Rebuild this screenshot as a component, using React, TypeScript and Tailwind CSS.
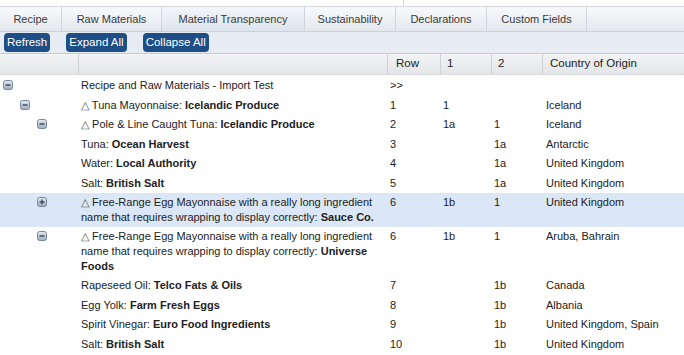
import React from 'react'

type Row = {
  level: number
  toggle?: 'minus' | 'plus'
  tri?: boolean
  name: string
  supplier?: string
  row: string
  c1: string
  c2: string
  country: string
  selected?: boolean
}

const rows: Row[] = [
  { level: 0, toggle: 'minus', name: 'Recipe and Raw Materials - Import Test', row: '>>', c1: '', c2: '', country: '' },
  { level: 1, toggle: 'minus', tri: true, name: 'Tuna Mayonnaise', supplier: 'Icelandic Produce', row: '1', c1: '1', c2: '', country: 'Iceland' },
  { level: 2, toggle: 'minus', tri: true, name: 'Pole & Line Caught Tuna', supplier: 'Icelandic Produce', row: '2', c1: '1a', c2: '1', country: 'Iceland' },
  { level: 3, name: 'Tuna', supplier: 'Ocean Harvest', row: '3', c1: '', c2: '1a', country: 'Antarctic' },
  { level: 3, name: 'Water', supplier: 'Local Authority', row: '4', c1: '', c2: '1a', country: 'United Kingdom' },
  { level: 3, name: 'Salt', supplier: 'British Salt', row: '5', c1: '', c2: '1a', country: 'United Kingdom' },
  {
    level: 2, toggle: 'plus', tri: true, selected: true,
    name: 'Free-Range Egg Mayonnaise with a really long ingredient name that requires wrapping to display correctly',
    supplier: 'Sauce Co.', row: '6', c1: '1b', c2: '1', country: 'United Kingdom',
  },
  {
    level: 2, toggle: 'minus', tri: true,
    name: 'Free-Range Egg Mayonnaise with a really long ingredient name that requires wrapping to display correctly',
    supplier: 'Universe Foods', row: '6', c1: '1b', c2: '1', country: 'Aruba, Bahrain',
  },
  { level: 3, name: 'Rapeseed Oil', supplier: 'Telco Fats & Oils', row: '7', c1: '', c2: '1b', country: 'Canada' },
  { level: 3, name: 'Egg Yolk', supplier: 'Farm Fresh Eggs', row: '8', c1: '', c2: '1b', country: 'Albania' },
  { level: 3, name: 'Spirit Vinegar', supplier: 'Euro Food Ingredients', row: '9', c1: '', c2: '1b', country: 'United Kingdom, Spain' },
  { level: 3, name: 'Salt', supplier: 'British Salt', row: '10', c1: '', c2: '1b', country: 'United Kingdom' },
]

const tabs = [
  { label: 'Recipe', w: 'w-[62px]' },
  { label: 'Raw Materials', w: 'w-[100px]' },
  { label: 'Material Transparency', w: 'w-[143px]' },
  { label: 'Sustainability', w: 'w-[91px]' },
  { label: 'Declarations', w: 'w-[91px]' },
  { label: 'Custom Fields', w: 'w-[100px]' },
]

function Toggle({ kind }: { kind: 'minus' | 'plus' }) {
  return (
    <svg width="10" height="10" viewBox="0 0 10 10" className="block">
      <defs>
        <linearGradient id={`tg-${kind}`} x1="0" y1="0" x2="0" y2="1">
          <stop offset="0" stopColor="#e4e9f0" />
          <stop offset="1" stopColor="#9eabbd" />
        </linearGradient>
      </defs>
      <rect x="0.5" y="0.5" width="9" height="9" rx="2" fill={`url(#tg-${kind})`} stroke="#7a889b" />
      <path d="M2.5 5h5" stroke="#3b4759" strokeWidth="1.4" />
      {kind === 'plus' && <path d="M5 2.5v5" stroke="#3b4759" strokeWidth="1.4" />}
    </svg>
  )
}

export default function App() {
  return (
    <div className="w-[684px] h-[355px] overflow-hidden bg-white text-[#222] font-['Liberation_Sans',Arial,sans-serif] text-[11px]">
      <div className="h-[7px] flex border-b border-[#d3d7dc]">
        <div className="w-[404px] border-r border-[#d3d7dc]" />
      </div>

      <div className="h-[25px] flex bg-gradient-to-b from-[#f8f9fb] to-[#e4e8ed] border-b border-[#c9d2dc]">
        {tabs.map((t, i) => (
          <div
            key={t.label}
            className={`${t.w} h-full flex items-center justify-center border-r border-[#cfd5dc] text-[11px] text-[#3a3a3a] ${
              i === 2 ? 'bg-gradient-to-b from-[#f3f6f9] to-[#dde4ec]' : ''
            }`}
          >
            {t.label}
          </div>
        ))}
      </div>

      <div className="h-[22px] flex items-center gap-[16px] pl-[4px] bg-[#e7ecf2] border-b border-[#c4ccd6]">
        {['Refresh', 'Expand All', 'Collapse All'].map((b) => (
          <button
            key={b}
            className="h-[19px] px-[3px] rounded-[4px] bg-[#1d4e86] text-white text-[11.5px] leading-none"
          >
            {b}
          </button>
        ))}
      </div>

      <div className="h-[21px] flex bg-gradient-to-b from-[#f2f3f4] to-[#e3e5e8] border-b border-[#d6d9dd] text-[11.5px]">
        <div className="w-[79px] border-r border-[#cdd1d6]" />
        <div className="w-[309px] border-r border-[#cdd1d6]" />
        <div className="w-[53px] border-r border-[#cdd1d6] flex items-center pl-[8px]">Row</div>
        <div className="w-[51px] border-r border-[#cdd1d6] flex items-center pl-[6px]">1</div>
        <div className="w-[51px] border-r border-[#cdd1d6] flex items-center pl-[6px]">2</div>
        <div className="flex-1 flex items-center pl-[7px]">Country of Origin</div>
      </div>

      <div className="flex flex-col pt-[1px]">
        {rows.map((r, i) => (
          <div
            key={i}
            className={`flex py-[2.4px] leading-[14.7px] ${r.selected ? 'bg-[#dbe7f6]' : ''}`}
          >
            <div className="w-[79px] shrink-0">
              {r.toggle && (
                <div style={{ marginLeft: 3 + r.level * 17 }} className="mt-[2px]">
                  <Toggle kind={r.toggle} />
                </div>
              )}
            </div>
            <div className="w-[309px] shrink-0 pl-[2px] pr-[4px]">
              {r.tri && <span className="text-[#555]">△ </span>}
              {r.name}
              {r.supplier && (
                <>
                  : <b>{r.supplier}</b>
                </>
              )}
            </div>
            <div className="w-[53px] shrink-0 pl-[2px]">{r.row}</div>
            <div className="w-[51px] shrink-0 pl-[2px]">{r.c1}</div>
            <div className="w-[51px] shrink-0 pl-[2px]">{r.c2}</div>
            <div className="flex-1 pl-[3px]">{r.country}</div>
          </div>
        ))}
      </div>
    </div>
  )
}
